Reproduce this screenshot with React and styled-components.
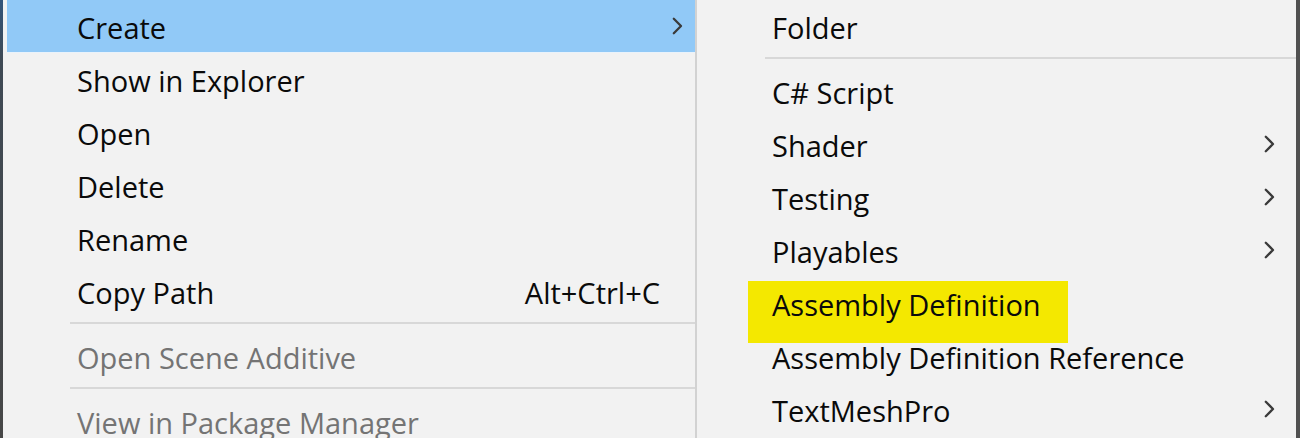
import React from 'react';
import styled, { createGlobalStyle } from 'styled-components';

const GlobalStyle = createGlobalStyle`
    html, body {
        margin: 0;
        padding: 0;
        background: #f2f2f2;
        overflow: hidden;
    }
    body {
        font-family: "Open Sans", "Noto Sans", "Liberation Sans", sans-serif;
        -webkit-font-smoothing: antialiased;
    }
`;

const mainItems = [
    { label: 'Create', arrow: true, active: true },
    { label: 'Show in Explorer' },
    { label: 'Open' },
    { label: 'Delete' },
    { label: 'Rename' },
    { label: 'Copy Path', shortcut: 'Alt+Ctrl+C' },
    { separator: true },
    { label: 'Open Scene Additive', disabled: true },
    { separator: true },
    { label: 'View in Package Manager', disabled: true },
];

const createItems = [
    { label: 'Folder' },
    { separator: true },
    { label: 'C# Script' },
    { label: 'Shader', arrow: true },
    { label: 'Testing', arrow: true },
    { label: 'Playables', arrow: true },
    { label: 'Assembly Definition', marked: true },
    { label: 'Assembly Definition Reference' },
    { label: 'TextMeshPro', arrow: true },
];

function Chevron() {
    return (
        <svg width="11" height="18" viewBox="0 0 11 18">
            <polyline
                points="1.8,1.8 9,9 1.8,16.2"
                fill="none"
                stroke="#3a3a3a"
                strokeWidth="2.3"
                strokeLinecap="round"
                strokeLinejoin="round"
            />
        </svg>
    );
}

function Menu({ items, arrowInset, ...rest }) {
    return (
        <MenuPanel {...rest}>
            {items.map((item, i) => {
                if (item.separator) return <Separator key={i} />;
                return (
                    <Item key={i} $active={item.active} $disabled={item.disabled} $marked={item.marked}>
                        <Label>{item.label}</Label>
                        {item.shortcut && <Shortcut>{item.shortcut}</Shortcut>}
                        {item.arrow && (
                            <Arrow $inset={arrowInset}>
                                <Chevron />
                            </Arrow>
                        )}
                    </Item>
                );
            })}
        </MenuPanel>
    );
}

export default function App() {
    return (
        <>
            <GlobalStyle />
            <Screen>
                <Edge />
                <Menu items={mainItems} arrowInset={12} $width={694} $divider />
                <Menu items={createItems} arrowInset={21} $grow />
            </Screen>
        </>
    );
}

const Screen = styled.div`
    display: flex;
    height: 438px;
    width: 1300px;
    overflow: hidden;
    background: #f2f2f2;
`;

const Edge = styled.div`
    width: 3px;
    flex-shrink: 0;
    background: linear-gradient(#34557a 0, #3f4a55 60px, #474747 100%);
`;

const MenuPanel = styled.div`
    box-sizing: border-box;
    flex: ${props => (props.$grow ? '1' : `0 0 ${props.$width}px`)};
    display: flex;
    flex-direction: column;
    background: #f2f2f2;
    border-right: ${props => (props.$divider ? '2px solid #d2d2d2' : '4px solid #505050')};
    padding-left: ${props => (props.$divider ? '4px' : '5px')};
`;

const Item = styled.div`
    position: relative;
    box-sizing: border-box;
    height: 53px;
    flex-shrink: 0;
    display: flex;
    align-items: center;
    padding: 2px 0 0 70px;
    font-size: 29px;
    color: ${props => (props.$disabled ? '#747474' : '#0a0a0a')};
    background: ${props => (props.$active ? '#91c9f7' : 'transparent')};
    border-bottom: 1px solid ${props => (props.$active ? '#eaf3fb' : 'transparent')};
    white-space: nowrap;

    &::before {
        content: '';
        display: ${props => (props.$marked ? 'block' : 'none')};
        position: absolute;
        left: 46px;
        top: 4px;
        width: 320px;
        height: 62px;
        background: #f4e800;
    }
`;

const Label = styled.span`
    position: relative;
    flex: 1;
`;

const Shortcut = styled.span`
    position: relative;
    margin-right: 35px;
`;

const Arrow = styled.span`
    display: flex;
    align-items: center;
    margin-right: ${props => props.$inset}px;
    margin-top: -2px;
`;

const Separator = styled.div`
    flex-shrink: 0;
    height: 2px;
    margin: 4px 0 6px 63px;
    background: #d8d8d8;
`;
